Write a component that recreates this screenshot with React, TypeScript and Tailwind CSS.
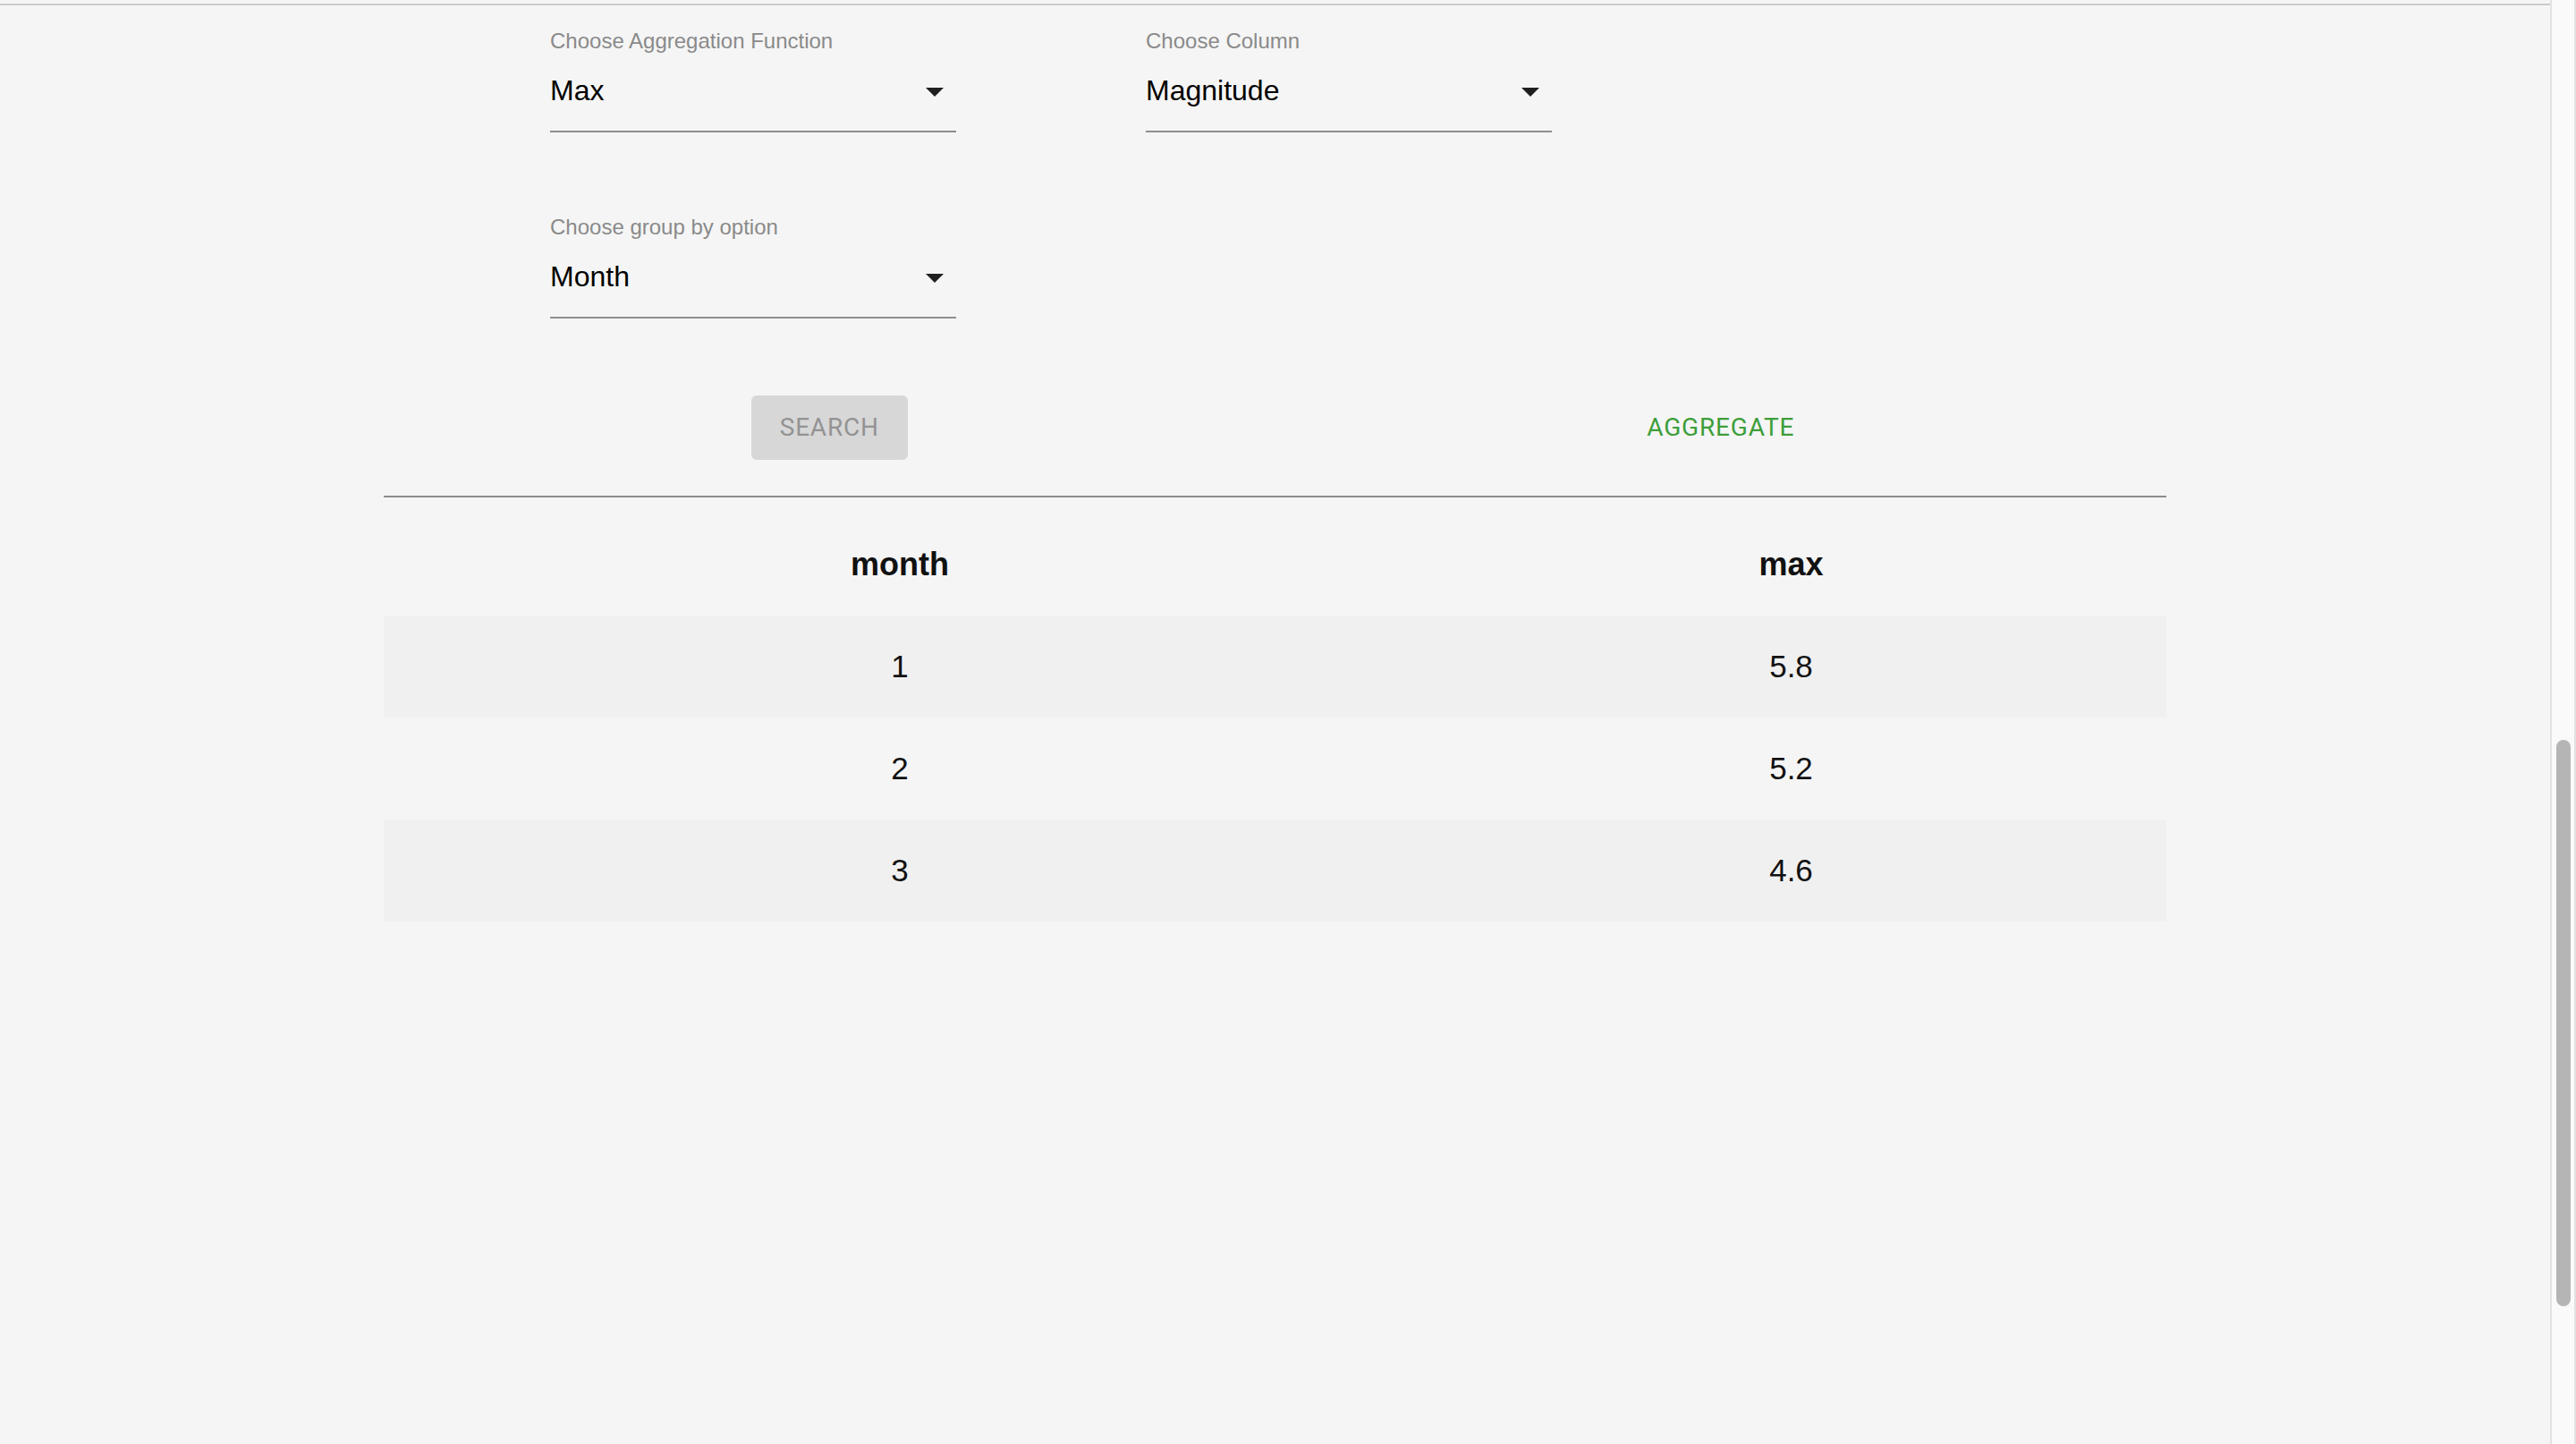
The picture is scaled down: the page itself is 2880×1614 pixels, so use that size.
import React from "react";

const sans = { fontFamily: '"Liberation Sans", Arial, sans-serif' };

function Arrow() {
	return (
		<svg width="20" height="10" viewBox="0 0 20 10" className="mr-[14px] mt-[4px] shrink-0">
			<polygon points="0,0 20,0 10,10" fill="#1f1f1f" />
		</svg>
	);
}

function SelectField({ label, value }: { label: string; value: string }) {
	return (
		<div className="w-[454px]">
			<div className="text-[24px] leading-[24px] text-[#8a8a8a]">{label}</div>
			<div className="mt-[24px] flex items-center justify-between border-b-2 border-[#8e8e8e] pb-[26px]">
				<span className="text-[32px] leading-[38px] text-black">{value}</span>
				<Arrow />
			</div>
		</div>
	);
}

const rows = [
	{ month: "1", max: "5.8" },
	{ month: "2", max: "5.2" },
	{ month: "3", max: "4.6" }
];

export default function App() {
	return (
		<div className="flex h-screen w-full overflow-hidden bg-[#f5f5f5]" style={sans}>
			<main className="flex-1 flex flex-col">
				<div className="mt-[4px] h-[2px] w-full bg-[#cbcbcb]" />

				<div className="mx-auto w-[1993px]">
					<div className="pl-[186px] pt-[28px]">
						<div className="flex gap-[212px]">
							<SelectField label="Choose Aggregation Function" value="Max" />
							<SelectField label="Choose Column" value="Magnitude" />
						</div>
						<div className="mt-[94px]">
							<SelectField label="Choose group by option" value="Month" />
						</div>
					</div>

					<div
						className="mt-[86px] grid grid-cols-2"
						style={{ fontFamily: "Roboto, Helvetica, Arial, sans-serif" }}
					>
						<div className="flex justify-center">
							<button
								disabled
								className="h-[72px] rounded-[6px] bg-[#d7d7d7] px-[32px] text-[28px] leading-[48px] font-normal uppercase tracking-[0.8px] text-[#939393]"
							>
								Search
							</button>
						</div>
						<div className="flex justify-center">
							<button className="h-[72px] px-[32px] text-[28px] leading-[48px] font-normal uppercase tracking-[0.8px] text-[#3d9e3a]">
								Aggregate
							</button>
						</div>
					</div>

					<div className="mt-[40px] h-[2px] w-full bg-[#8c8c8c]" />

					<div className="mt-[18px] text-[#111]">
						<div className="grid h-[114px] grid-cols-[1154px_839px] items-center text-center text-[36px] font-bold">
							<div>month</div>
							<div>max</div>
						</div>
						{rows.map((r, i) => (
							<div
								key={r.month}
								className={`grid h-[114px] grid-cols-[1154px_839px] items-center text-center text-[35px] ${
									i % 2 === 0 ? "bg-[#f0f0f0]" : ""
								}`}
							>
								<div>{r.month}</div>
								<div>{r.max}</div>
							</div>
						))}
					</div>
				</div>
			</main>

			<div className="w-[29px] shrink-0 border-l-2 border-r-2 border-[#e2e2e2] bg-[#fafafa] flex justify-center">
				<div className="mt-[827px] h-[633px] w-[16px] rounded-full bg-[#b5b5b5]" />
			</div>
		</div>
	);
}
